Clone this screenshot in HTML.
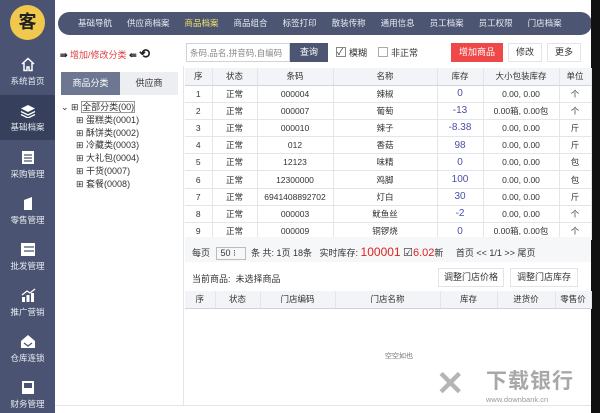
<!DOCTYPE html>
<html><head><meta charset="utf-8"><style>
*{margin:0;padding:0;box-sizing:border-box}
body{width:600px;height:413px;overflow:hidden;background:#fff;font-family:"Liberation Sans","Noto Sans CJK SC",sans-serif;font-size:9px;color:#333;position:relative}
.a{position:absolute}
.side{left:0;top:0;width:55px;height:413px;background:#4a5472}
.si{position:absolute;left:0;width:55px;text-align:center;color:#e8ebf2;font-size:8.5px}
.si svg{display:block;margin:0 auto 3px}
table{border-collapse:collapse;table-layout:fixed}
td{height:17.2px;text-align:center;border-right:1px solid #e3e5ea;border-bottom:1px solid #e3e5ea;font-size:8.5px;white-space:nowrap;overflow:hidden}
.h td{background:#f3f4f7;height:17px;border-bottom:1px solid #cfd3dc}
.b{color:#4a4fa8;font-size:10px}
.btn{position:absolute;border:1px solid #e2e4e8;background:#fff;text-align:center;font-size:9px}
</style></head><body>
<div class="a side"></div>
<div class="a" style="left:10px;top:5px;width:35px;height:35px;border-radius:50%;background:#f1c84e;text-align:center;line-height:35px;font-size:18px;font-weight:bold;color:#222">客</div>
<div class="a" style="left:0;top:95px;width:55px;height:45px;background:#363f5b"></div>
<div class="si" style="top:57px"><svg width="16" height="15" viewBox="0 0 16 15"><path d="M2 7L8 1.5 14 7M4 6v7.5h3V10h2v3.5h3V6" fill="none" stroke="#fff" stroke-width="1.5"/></svg>系统首页</div>
<div class="si" style="top:104px"><svg width="16" height="14" viewBox="0 0 16 14"><path d="M8 1L15 4.5 8 8 1 4.5Z" fill="#fff"/><path d="M1 7.5L8 11 15 7.5M1 10.5L8 14 15 10.5" fill="none" stroke="#fff" stroke-width="1.3"/></svg>基础档案</div>
<div class="si" style="top:150px"><svg width="14" height="15" viewBox="0 0 14 15"><rect x="1" y="1" width="12" height="13" fill="#fff"/><path d="M3 5h8M3 8h8M3 11h8" stroke="#4a5472" stroke-width="1.2"/></svg>采购管理</div>
<div class="si" style="top:196px"><svg width="14" height="15" viewBox="0 0 14 15"><path d="M3 14V4l8-3v13z" fill="#fff"/></svg>零售管理</div>
<div class="si" style="top:242px"><svg width="16" height="15" viewBox="0 0 16 15"><rect x="1" y="1" width="14" height="13" fill="#fff"/><path d="M4 5h10M4 9h10" stroke="#4a5472" stroke-width="1.3"/></svg>批发管理</div>
<div class="si" style="top:288px"><svg width="16" height="15" viewBox="0 0 16 15"><path d="M2 14V9h3v5M6.5 14V7h3v7M11 14V5h3v9" fill="#fff"/><path d="M2 7l5-4 3 2 5-4" fill="none" stroke="#fff" stroke-width="1.3"/></svg>推广营销</div>
<div class="si" style="top:334px"><svg width="16" height="15" viewBox="0 0 16 15"><path d="M1 7L8 1 15 7v7H1z" fill="#fff"/><path d="M4 9l4 3 4-3" fill="none" stroke="#4a5472" stroke-width="1.3"/></svg>仓库连锁</div>
<div class="si" style="top:380px"><svg width="14" height="15" viewBox="0 0 14 15"><rect x="1" y="1" width="12" height="13" fill="#fff"/><rect x="3" y="3" width="8" height="5" fill="#4a5472"/></svg>财务管理</div>
<div class="a" style="left:58px;top:12px;width:534px;height:23px;border-radius:12px;background:#4c5672"></div>
<div class="a" style="left:78px;top:17px;color:#e8ebf2;font-size:8.5px;white-space:nowrap">
<span style="margin-right:15px">基础导航</span><span style="margin-right:15px">供应商档案</span><span style="margin-right:15px;color:#f0e36a">商品档案</span><span style="margin-right:15px">商品组合</span><span style="margin-right:15px">标签打印</span><span style="margin-right:15px">散装传称</span><span style="margin-right:15px">通用信息</span><span style="margin-right:15px">员工档案</span><span style="margin-right:15px">员工权限</span><span>门店档案</span></div>
<div class="a" style="left:591px;top:0;width:9px;height:413px;background:#111"></div>
<div class="a" style="left:60px;top:46px;font-size:9px;color:#e03a3a;white-space:nowrap"><b style="color:#222">⇛</b> 增加/修改分类 <b style="color:#222">⇚</b> <b style="color:#222;font-size:13px">⟲</b></div>
<div class="a" style="left:186px;top:43px;width:104px;height:19px;border:1px solid #cfd3da;color:#888;font-size:8.5px;padding:3px 3px">条码,品名,拼音码,自编码</div>
<div class="a" style="left:290px;top:43px;width:38px;height:19px;background:#4c5672;color:#fff;text-align:center;line-height:19px">查询</div>
<div class="a" style="left:336px;top:47px;width:10px;height:10px;border:1px solid #888;font-size:9px;line-height:8px">✓</div>
<div class="a" style="left:349px;top:46px">模糊</div>
<div class="a" style="left:378px;top:47px;width:10px;height:10px;border:1px solid #aaa"></div>
<div class="a" style="left:391px;top:46px">非正常</div>
<div class="a" style="left:451px;top:43px;width:52px;height:19px;background:#ef4848;color:#fff;text-align:center;line-height:19px">增加商品</div>
<div class="btn" style="left:508px;top:43px;width:34px;height:19px;line-height:17px">修改</div>
<div class="btn" style="left:547px;top:43px;width:34px;height:19px;line-height:17px">更多</div>
<div class="a" style="left:61px;top:72px;width:59px;height:23px;background:#6d7791;color:#fff;text-align:center;line-height:23px">商品分类</div>
<div class="a" style="left:120px;top:72px;width:58px;height:23px;background:#eceef2;text-align:center;line-height:23px">供应商</div>
<div class="a" style="left:61px;top:101px;font-size:9px;line-height:12.8px;white-space:pre">⌄ ⊞ <span style="border:1px solid #999">全部分类(00)</span>
      ⊞ 蛋糕类(0001)
      ⊞ 酥饼类(0002)
      ⊞ 冷藏类(0003)
      ⊞ 大礼包(0004)
      ⊞ 干货(0007)
      ⊞ 套餐(0008)</div>
<div class="a" style="left:183px;top:66px;width:1px;height:340px;background:#e3e5ea"></div>
<table class="a" style="left:185px;top:68px;width:406px">
<colgroup><col style="width:27px"><col style="width:45px"><col style="width:76px"><col style="width:104px"><col style="width:46px"><col style="width:76px"><col style="width:32px"></colgroup>
<tr class="h"><td>序</td><td>状态</td><td>条码</td><td>名称</td><td>库存</td><td>大小包装库存</td><td>单位</td></tr>
<tr><td>1</td><td>正常</td><td>000004</td><td>辣椒</td><td class="b">0</td><td>0.00, 0.00</td><td>个</td></tr>
<tr><td>2</td><td>正常</td><td>000007</td><td>葡萄</td><td class="b">-13</td><td>0.00箱, 0.00包</td><td>个</td></tr>
<tr><td>3</td><td>正常</td><td>000010</td><td>辣子</td><td class="b">-8.38</td><td>0.00, 0.00</td><td>斤</td></tr>
<tr><td>4</td><td>正常</td><td>012</td><td>香菇</td><td class="b">98</td><td>0.00, 0.00</td><td>斤</td></tr>
<tr><td>5</td><td>正常</td><td>12123</td><td>味精</td><td class="b">0</td><td>0.00, 0.00</td><td>包</td></tr>
<tr><td>6</td><td>正常</td><td>12300000</td><td>鸡脚</td><td class="b">100</td><td>0.00, 0.00</td><td>包</td></tr>
<tr><td>7</td><td>正常</td><td>6941408892702</td><td>灯白</td><td class="b">30</td><td>0.00, 0.00</td><td>斤</td></tr>
<tr><td>8</td><td>正常</td><td>000003</td><td>鱿鱼丝</td><td class="b">-2</td><td>0.00, 0.00</td><td>个</td></tr>
<tr><td>9</td><td>正常</td><td>000009</td><td>铜锣烧</td><td class="b">0</td><td>0.00箱, 0.00包</td><td>个</td></tr>
</table>
<div class="a" style="left:185px;top:237px;width:406px;height:25px;background:#f6f7f9"></div>
<div class="a" style="left:192px;top:245px;white-space:nowrap">每页 <span style="display:inline-block;width:30px;border:1px solid #bbb;padding:0 4px;margin:0 3px">50 ⁝</span> 条 共: 1页 18条 &nbsp; 实时库存: <span style="color:#d22;font-size:12px">100001</span> <span style="font-size:11px">☑</span><span style="color:#d22;font-size:11px">6.02</span>新 &nbsp;&nbsp;&nbsp; 首页 &lt;&lt; 1/1 &gt;&gt; 尾页</div>
<div class="a" style="left:192px;top:272px">当前商品: &nbsp;未选择商品</div>
<div class="btn" style="left:438px;top:268px;width:66px;height:19px;line-height:17px">调整门店价格</div>
<div class="btn" style="left:510px;top:268px;width:68px;height:19px;line-height:17px">调整门店库存</div>
<table class="a" style="left:185px;top:291px;width:406px">
<colgroup><col style="width:30px"><col style="width:45px"><col style="width:75px"><col style="width:105px"><col style="width:57px"><col style="width:58px"><col style="width:36px"></colgroup>
<tr class="h"><td>序</td><td>状态</td><td>门店编码</td><td>门店名称</td><td>库存</td><td>进货价</td><td>零售价</td></tr>
</table>
<div class="a" style="left:385px;top:351px;font-size:7px;color:#777">空空如也</div>
<div class="a" style="left:436px;top:364px;font-size:34px;line-height:40px;color:#b5b5b5;font-weight:bold">✕</div>
<div class="a" style="left:486px;top:370px;font-size:21px;line-height:24px;color:#a8a8a8;font-weight:bold;letter-spacing:1px">下载银行</div>
<div class="a" style="left:486px;top:395px;font-size:7.5px;color:#999">www.downbank.cn</div>
<div class="a" style="left:55px;top:405px;width:536px;height:1px;background:#e3e5ea"></div>
</body></html>
